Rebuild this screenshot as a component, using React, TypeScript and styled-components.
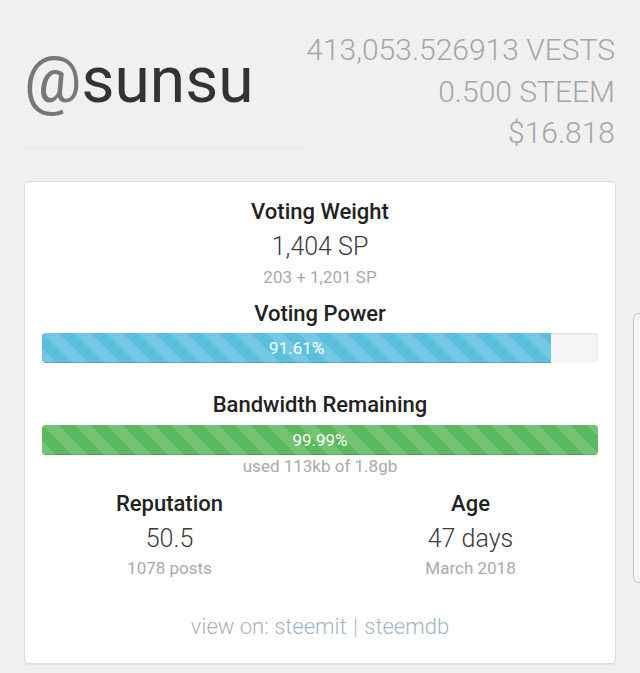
import React from 'react';
import styled, { createGlobalStyle } from 'styled-components';

const GlobalStyle = createGlobalStyle`
  html, body {
    margin: 0;
    padding: 0;
    background: #f0f0f0;
    font-family: Roboto, "Liberation Sans", Arial, sans-serif;
  }
`;

const light = `"Roboto Light", Roboto, "Liberation Sans", Arial, sans-serif`;

const Page = styled.div`
  position: relative;
  width: 640px;
  height: 673px;
  box-sizing: border-box;
  padding: 29px 25px 0 24px;
  background: #f0f0f0;
  overflow: hidden;
`;

const Header = styled.div`
  display: flex;
  align-items: flex-start;
`;

const NameCol = styled.div`
  width: 282px;
  height: 119px;
  box-sizing: border-box;
  padding-top: 20px;
  border-bottom: 1px solid #e7e7e7;
`;

const Name = styled.div`
  font-size: 64px;
  line-height: 64px;
  color: #333;
  white-space: nowrap;
`;

const At = styled.span`
  color: #777;
`;

const Balances = styled.div`
  flex: 1;
  text-align: right;
`;

const Balance = styled.div`
  font-family: ${light};
  font-size: 30px;
  font-weight: 300;
  line-height: 41.7px;
  color: #a6a6a6;
  white-space: nowrap;
`;

const Card = styled.div`
  margin-top: 27px;
  width: 592px;
  box-sizing: border-box;
  background: #fff;
  border: 1px solid #dcdcdc;
  border-radius: 4px;
  box-shadow: 0 1px 1px rgba(0, 0, 0, 0.05);
  padding: 15px 17px 22px;
  text-align: center;
`;

const Title = styled.div<{ $mt?: number }>`
  margin-top: ${p => p.$mt ?? 0}px;
  font-size: 22px;
  font-weight: 500;
  line-height: 30px;
  color: #222;
`;

const Value = styled.div<{ $mt?: number }>`
  margin-top: ${p => p.$mt ?? 5}px;
  font-family: ${light};
  font-size: 25px;
  font-weight: 300;
  line-height: 30px;
  color: #3a3a3a;
`;

const Sub = styled.div<{ $mt?: number }>`
  margin-top: ${p => p.$mt ?? 4}px;
  font-size: 17px;
  line-height: 22px;
  color: #aaa;
`;

const Track = styled.div<{ $mt?: number }>`
  margin-top: ${p => p.$mt ?? 4}px;
  height: 30px;
  display: flex;
  background: #f5f5f5;
  border-radius: 4px;
  box-shadow: inset 0 1px 2px rgba(0, 0, 0, 0.1);
  overflow: hidden;
`;

const Fill = styled.div<{ $color: string }>`
  height: 100%;
  display: flex;
  align-items: center;
  justify-content: center;
  background-color: ${p => p.$color};
  background-image: linear-gradient(
    45deg,
    rgba(255, 255, 255, 0.15) 25%,
    transparent 25%,
    transparent 50%,
    rgba(255, 255, 255, 0.15) 50%,
    rgba(255, 255, 255, 0.15) 75%,
    transparent 75%,
    transparent
  );
  background-size: 32px 32px;
  box-shadow: inset 0 -1px 0 rgba(0, 0, 0, 0.15);
  color: #fff;
  font-size: 17px;
  line-height: 30px;
`;

const Stats = styled.div`
  margin-top: 12px;
  display: flex;
  justify-content: center;
`;

const Stat = styled.div`
  flex: 0 0 301px;
`;

const Footer = styled.div`
  margin-top: 34px;
  font-family: ${light};
  font-size: 22px;
  font-weight: 300;
  line-height: 28px;
  color: #b0b0b0;
`;

const Link = styled.a`
  color: #a2b5c5;
  text-decoration: none;
`;

const Sep = styled.span`
  color: #bbb;
  margin: 0 1px;
`;

const EdgeHandle = styled.div`
  position: absolute;
  left: 633px;
  top: 313px;
  width: 14px;
  height: 270px;
  box-sizing: border-box;
  border: 1px solid #c4c4c4;
  border-radius: 6px;
  background: #f6f6f6;
`;

interface BarProps {
  percent: number;
  color: string;
  mt?: number;
}

const Bar: React.FC<BarProps> = ({ percent, color, mt }) => (
  <Track $mt={mt}>
    <Fill $color={color} style={{ width: `${percent}%` }}>
      {percent.toFixed(2)}%
    </Fill>
  </Track>
);

const App: React.FC = () => {
  return (
    <Page>
      <GlobalStyle />
      <Header>
        <NameCol>
          <Name>
            <At>@</At>sunsu
          </Name>
        </NameCol>
        <Balances>
          <Balance>413,053.526913 VESTS</Balance>
          <Balance>0.500 STEEM</Balance>
          <Balance>$16.818</Balance>
        </Balances>
      </Header>
      <Card>
        <Title>Voting Weight</Title>
        <Value>1,404 SP</Value>
        <Sub>203 + 1,201 SP</Sub>
        <Title $mt={11}>Voting Power</Title>
        <Bar percent={91.61} color="#5bc0de" />
        <Title $mt={27}>Bandwidth Remaining</Title>
        <Bar percent={99.99} color="#5cb85c" mt={5} />
        <Sub $mt={0}>used 113kb of 1.8gb</Sub>
        <Stats>
          <Stat>
            <Title>Reputation</Title>
            <Value>50.5</Value>
            <Sub $mt={3}>1078 posts</Sub>
          </Stat>
          <Stat>
            <Title>Age</Title>
            <Value>47 days</Value>
            <Sub $mt={3}>March 2018</Sub>
          </Stat>
        </Stats>
        <Footer>
          view on: <Link href="#">steemit</Link>
          <Sep> | </Sep>
          <Link href="#">steemdb</Link>
        </Footer>
      </Card>
      <EdgeHandle />
    </Page>
  );
};

export default App;
